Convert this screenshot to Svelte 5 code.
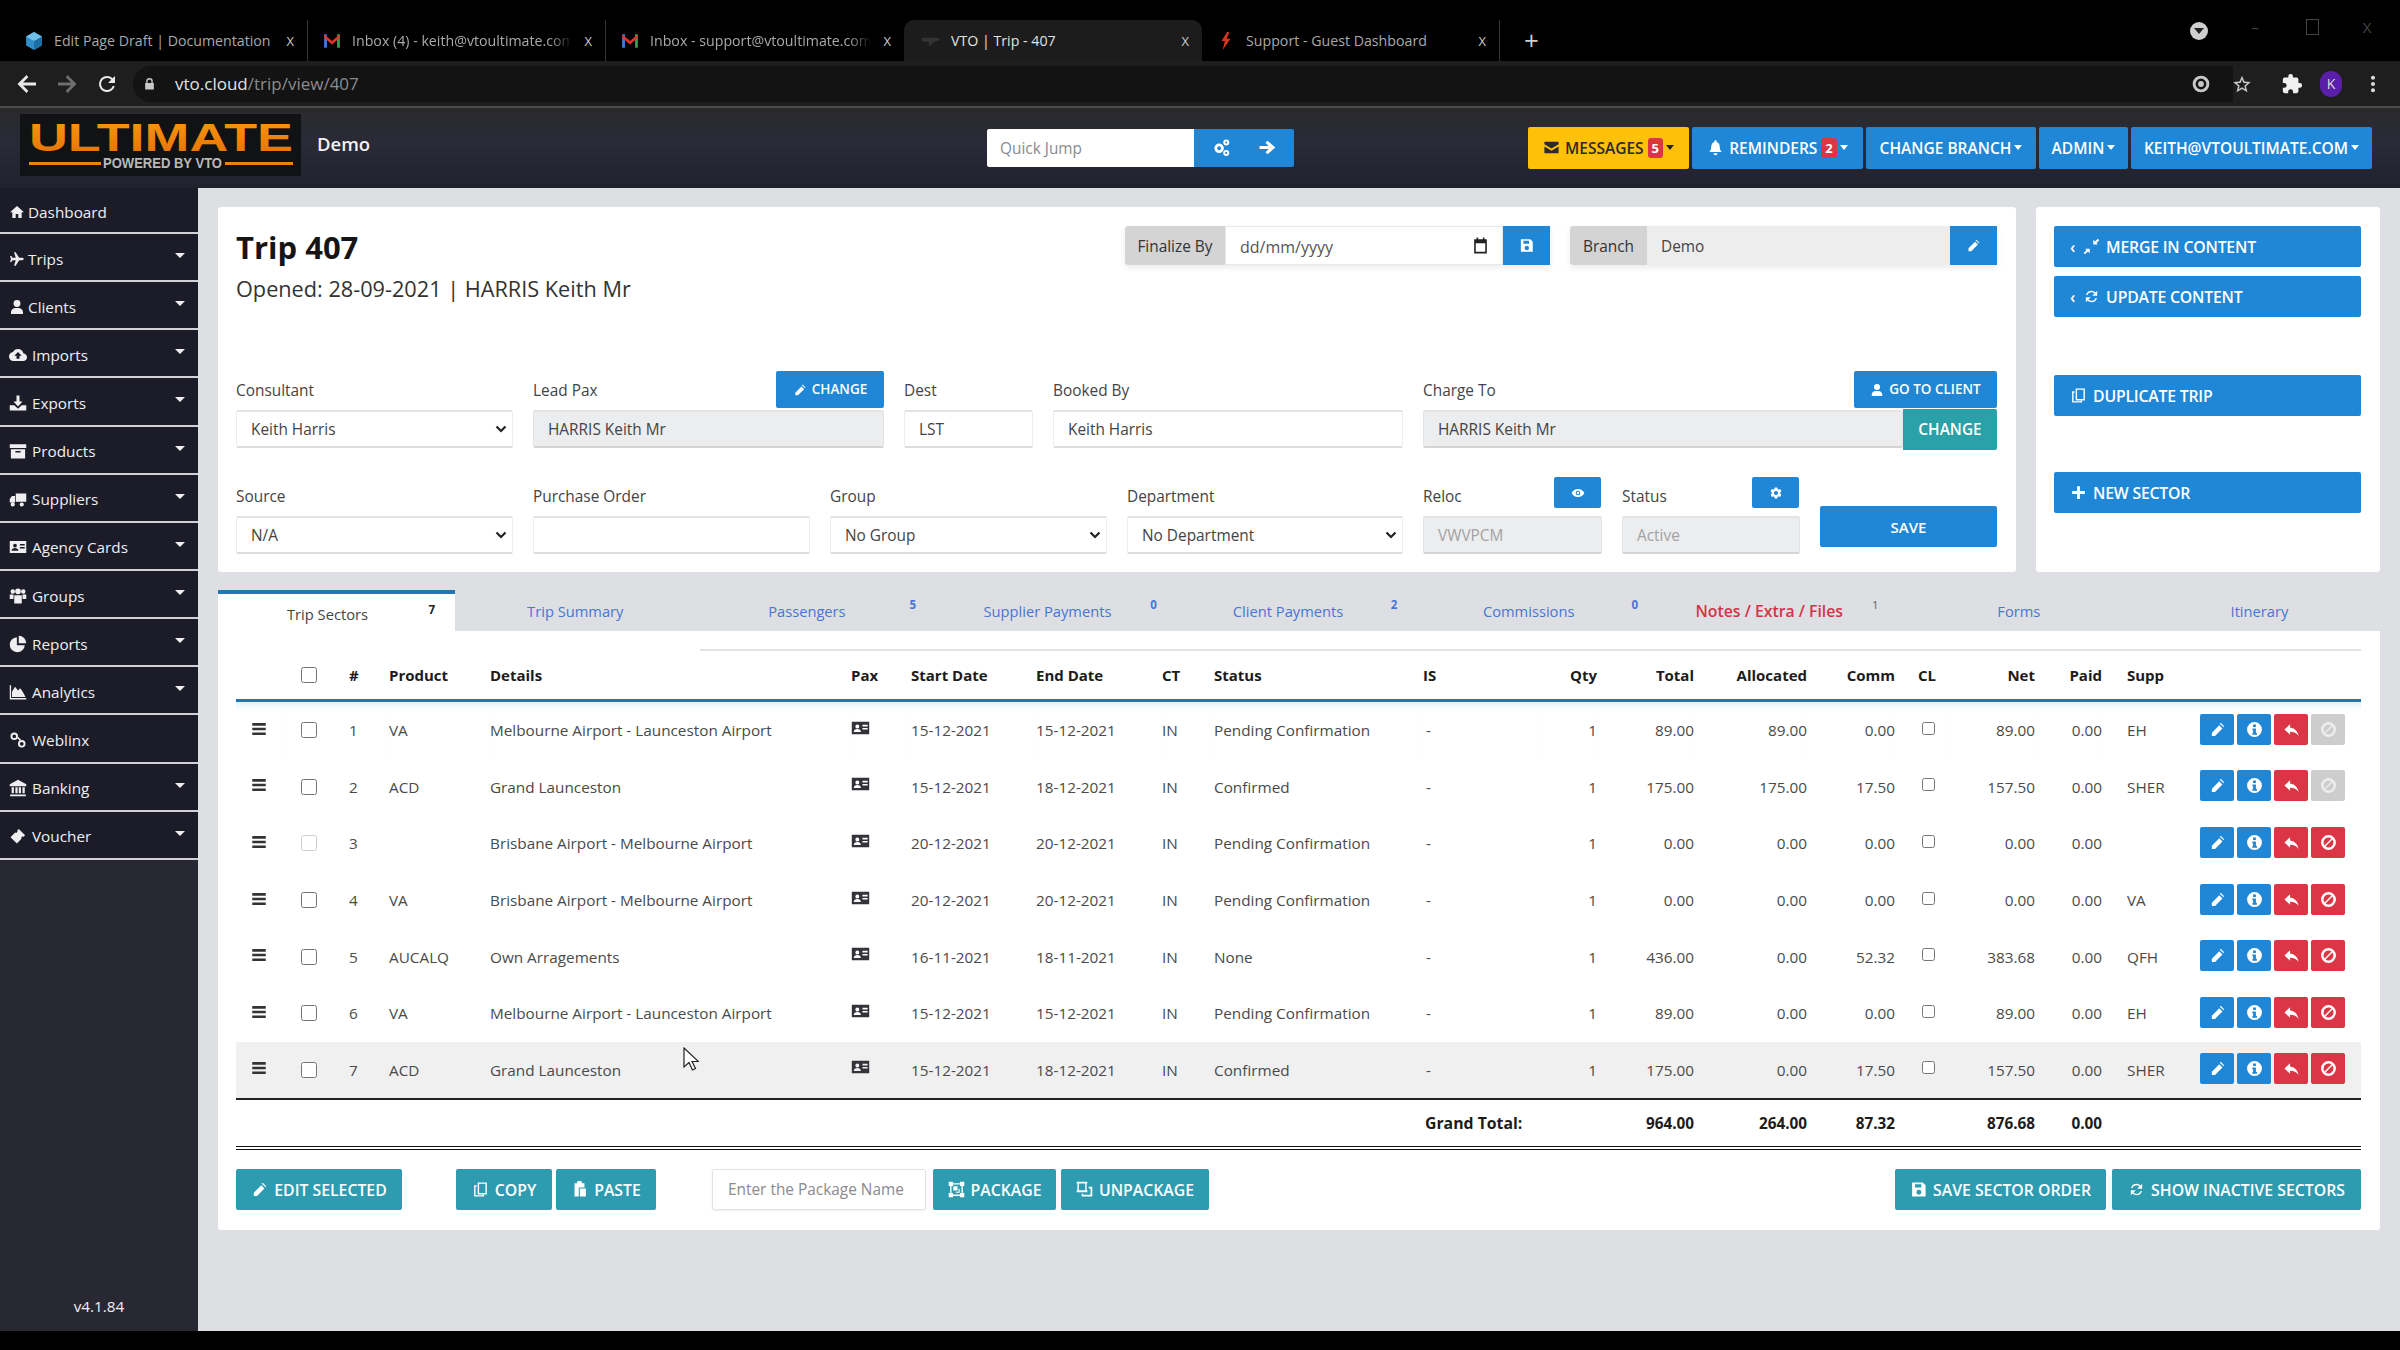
<script>
	const icons = {
		home: 'M12 3 1.5 12.5H5V21h5v-6h4v6h5v-8.5h3.5z',
		plane: 'M22 12c0-1-1-1.8-2.2-1.8h-4.6L10 2H7.6l2.5 8.2H5.4L3.4 7.6H1.5L3 12l-1.5 4.4h1.9l2-2.6h4.7L7.6 22H10l5.2-8.2h4.6C21 13.8 22 13 22 12z',
		user: 'M12 12a5.2 5.2 0 1 0 0-10.4A5.2 5.2 0 0 0 12 12zm-2 1.5c-4 0-7 2.6-7 6.5v2.4h18V20c0-3.9-3-6.5-7-6.5z',
		cloud: 'M19.35 10.04C18.67 6.59 15.64 4 12 4 9.11 4 6.6 5.64 5.35 8.04 2.34 8.36 0 10.91 0 14c0 3.31 2.69 6 6 6h13c2.76 0 5-2.24 5-5 0-2.64-2.05-4.78-4.65-4.96zM14 13v4h-4v-4H7l5-5 5 5h-3z',
		download: 'M10 2h4v8h4l-6 6.5L6 10h4zM1 15h6l5 4.5 5-4.5h6v7H1z',
		archive: 'M1 3h22v5H1zM2.5 9.5h19V22h-19zM8.5 12v2h7v-2z',
		truck: 'M23 4.500H9v11h14zM8 8H4L1 12v4.500h7zM5 16.500a2.800 2.800 0 1 0 0 5.600 2.800 2.800 0 0 0 0-5.600zM17 16.500a2.800 2.800 0 1 0 0 5.600 2.800 2.800 0 0 0 0-5.600z',
		card: 'M1 4h22v16H1zM8 7.500a2.500 2.500 0 1 0 0 5 2.500 2.500 0 0 0 0-5zM3.500 17c0-2.500 2-3.800 4.500-3.800s4.500 1.300 4.500 3.800zM14.500 8v2H21V8zM14.500 12v2H21v-2z',
		group: 'M5 3a3 3 0 1 0 0 6 3 3 0 0 0 0-6zM19 3a3 3 0 1 0 0 6 3 3 0 0 0 0-6zM12 2a3.800 3.800 0 1 0 0 7.600A3.800 3.800 0 0 0 12 2zM1 10h5v6H1zM18 10h5v6h-5zM7 11h10v11H7z',
		pie: 'M10.500 3A10 10 0 1 0 21 13.500H10.500zM13 1a10 10 0 0 1 10 10H13z',
		area: 'M1 3h1.800v17H23v2H1zM4 18.500v-7L8 5l4 5 3-3 3.500 5 3.500 6.500z',
		link: 'M7 2a5 5 0 1 0 0 10 5 5 0 0 0 0-10zm0 2.500a2.500 2.500 0 1 1 0 5 2.500 2.500 0 0 1 0-5zM17 12a5 5 0 1 0 0 10 5 5 0 0 0 0-10zm0 2.500a2.500 2.500 0 1 1 0 5 2.500 2.500 0 0 1 0-5zM11 9.500l1.500-1.500 3.500 3.500-1.500 1.500z',
		bank: 'M12 1 1 7v2.500h22V7zM3.500 11h3v8h-3zM8.500 11h3v8h-3zM13 11h3v8h-3zM18 11h3v8h-3zM1.500 20.500h21V23h-21z',
		ticket: 'M13 2.500 21.500 11l-2 2a2 2 0 0 0-2.800 2.800L10.500 22 2 13.500l6.200-6.200A2 2 0 0 0 11 4.500z',
		pencil: 'M4 16.500V21h4.500L19 10.500 14.500 6zM20.700 8.800a1.500 1.500 0 0 0 0-2.100l-3.400-3.400a1.500 1.500 0 0 0-2.100 0L16 4.500z',
		info: 'M12 1.500a10.500 10.500 0 1 0 0 21 10.500 10.500 0 0 0 0-21zM10 5h4v3.500h-4zM9 10.500h5v6.500h1.500v2.500h-6.500V17H10v-4H9z',
		reply: 'M10 9V4.500L2 12l8 7.500V15c5.500 0 9 1.600 12 6-1-6-4.500-11-12-12z',
		ban: 'M12 1.500a10.500 10.500 0 1 0 0 21 10.500 10.500 0 0 0 0-21zM5 12a7 7 0 0 1 11.200-5.600l-9.800 9.800A7 7 0 0 1 5 12zm7 7a7 7 0 0 1-4.200-1.400l9.800-9.800A7 7 0 0 1 12 19z',
		save: 'M3 2h15l4 4v16H3zM7 4.500V9h9V4.500zM12.500 12.500a3.500 3.500 0 1 0 0 7 3.500 3.500 0 0 0 0-7z',
		eye: 'M12 5C7 5 2.700 8.100 1 12c1.700 3.900 6 7 11 7s9.300-3.100 11-7c-1.700-3.900-6-7-11-7zm0 3a4 4 0 1 1 0 8 4 4 0 0 1 0-8zm0 1.800a2.200 2.200 0 1 0 0 4.400 2.200 2.200 0 0 0 0-4.400z',
		gear: 'M19.140 12.940c.04-.3.06-.61.06-.94 0-.32-.02-.64-.07-.94l2.030-1.580a.49.49 0 0 0 .12-.61l-1.920-3.320a.488.488 0 0 0-.59-.22l-2.390.96c-.5-.38-1.030-.7-1.620-.94l-.36-2.540a.484.484 0 0 0-.48-.41h-3.840c-.24 0-.43.17-.47.41l-.36 2.540c-.59.24-1.130.57-1.620.94l-2.390-.96c-.22-.08-.47 0-.59.22L2.740 8.870c-.12.21-.08.47.12.61l2.030 1.580c-.05.3-.09.63-.09.94s.02.64.07.94l-2.030 1.580a.49.49 0 0 0-.12.61l1.920 3.320c.12.22.37.29.59.22l2.390-.96c.5.38 1.030.7 1.620.94l.36 2.540c.05.24.24.41.48.41h3.840c.24 0 .44-.17.47-.41l.36-2.540c.59-.24 1.130-.56 1.620-.94l2.390.96c.22.08.47 0 .59-.22l1.920-3.320c.12-.22.07-.47-.12-.61l-2.010-1.580zM12 15.600A3.600 3.600 0 1 1 12 8.400a3.600 3.600 0 0 1 0 7.200z',
		envelope: 'M2 4h20v3.500l-10 6-10-6zM2 10.500l10 6 10-6V20H2z',
		bell: 'M12 23a2.800 2.800 0 0 0 2.800-2.800H9.200A2.800 2.800 0 0 0 12 23zM21 18.500c-1.500-1.500-3-3-3-8 0-3.200-2-5.600-4.500-6.300V3a1.500 1.500 0 0 0-3 0v1.200C8 4.900 6 7.300 6 10.500c0 5-1.500 6.500-3 8z',
		cogs: 'M9 7a6 6 0 1 0 0 12A6 6 0 0 0 9 7zm0 3.500a2.500 2.500 0 1 1 0 5 2.500 2.500 0 0 1 0-5zM18 2a3.800 3.800 0 1 0 0 7.600A3.800 3.800 0 0 0 18 2zm0 2.500a1.300 1.300 0 1 1 0 2.600 1.300 1.300 0 0 1 0-2.600zM18 15a3.800 3.800 0 1 0 0 7.600 3.800 3.800 0 0 0 0-7.600zm0 2.500a1.300 1.300 0 1 1 0 2.600 1.300 1.300 0 0 1 0-2.600z',
		arrow: 'M12 3.500 9.500 6l4 4H2v4h11.500l-4 4 2.500 2.500L22 12z',
		copy: 'M8 2h13v17H8zM10 4v13h9V4zM3 6h3.500v2H5v12h10v-.5h2V22H3z',
		paste: 'M5 3h3.500a3.500 3.500 0 0 1 7 0H19v6h-8v13H5zM12.500 10.500H21V22h-8.500z',
		pack: 'M1 1h6v2h10V1h6v6h-2v10h2v6h-6v-2H7v2H1v-6h2V7H1zM7 5v2H5v10h2v2h10v-2h2V7h-2V5zM7.500 7.500h6v6h-6zM15 11h1.500v5.500H11V15h4z',
		unpack: 'M1 1h15v2.500H15V13h1v3H1v-3h1V3.500H1zM4 3.500V13h9V3.500zM18 8h5v14H8v-4h2v1.500h10.500v-9H18z',
		refresh: 'M17.650 6.350A7.958 7.958 0 0 0 12 4a8 8 0 0 0-7.730 6h2.080A6 6 0 0 1 12 6c1.660 0 3.140.69 4.220 1.780L13 11h7V4zM6.350 17.650A7.958 7.958 0 0 0 12 20a8 8 0 0 0 7.730-6h-2.080A6 6 0 0 1 12 18c-1.660 0-3.140-.69-4.220-1.780L11 13H4v7z',
		merge: 'M3 15h6.500v6.500L7 19l-4 4-2-2 4-4zM21 9h-6.500V2.500L17 5l4-4 2 2-4 4z',
		plus: 'M10 3h4v7h7v4h-7v7h-4v-7H3v-4h7z',
		calendar: 'M4 4h3V2h2v2h6V2h2v2h3v18H4zM6 9v11h12V9z',
		bars: 'M3 4h18v3.500H3zM3 10.250h18v3.500H3zM3 16.500h18V20H3z',
		back: 'M21 10.500H8l5.300-5.300L11.500 3 2.500 12l9 9 1.800-2.200L8 13.500h13z',
		forward: 'M3 10.500h13l-5.300-5.300L12.500 3l9 9-9 9-1.800-2.200 5.300-5.300H3z',
		reload: 'M17.650 6.350A7.958 7.958 0 0 0 12 4a8 8 0 1 0 7.730 10h-2.080A6 6 0 1 1 12 6c1.660 0 3.140.69 4.220 1.780L13 11h7V4z',
		lock: 'M6 10V7a6 6 0 0 1 12 0v3h2v12H4V10zM8.500 10h7V7a3.500 3.500 0 0 0-7 0z',
		star: 'M12 2l3 7 7.500.6-5.700 5 1.800 7.400L12 18l-6.600 4 1.800-7.400-5.700-5L9 9zM12 6.500l-1.700 4.200-4.500.3 3.400 3-1.100 4.400 3.900-2.400 3.900 2.400-1.100-4.400 3.400-3-4.500-.3z',
		puzzle: 'M20.500 11H19V7a2 2 0 0 0-2-2h-4V3.500a2.500 2.500 0 0 0-5 0V5H4a2 2 0 0 0-2 2v3.800h1.500a2.700 2.700 0 0 1 0 5.400H2V20a2 2 0 0 0 2 2h3.800v-1.500a2.700 2.700 0 0 1 5.400 0V22H17a2 2 0 0 0 2-2v-4h1.500a2.500 2.500 0 0 0 0-5z',
		ring: 'M12 2a10 10 0 1 0 0 20 10 10 0 0 0 0-20zm0 3.500a6.500 6.500 0 1 1 0 13 6.500 6.500 0 0 1 0-13zm0 3a3.500 3.500 0 1 0 0 7 3.500 3.500 0 0 0 0-7z',
		dots: 'M12 3a2.200 2.200 0 1 0 0 4.400A2.200 2.200 0 0 0 12 3zM12 9.800a2.200 2.200 0 1 0 0 4.400 2.200 2.200 0 0 0 0-4.400zM12 16.600a2.200 2.200 0 1 0 0 4.400 2.200 2.200 0 0 0 0-4.400z'
	};

	const tabs = [
		{ title: 'Edit Page Draft | Documentation', fav: 'hex' },
		{ title: 'Inbox (4) - keith@vtoultimate.com', fav: 'gmail', fade: true },
		{ title: 'Inbox - support@vtoultimate.com', fav: 'gmail', fade: true },
		{ title: 'VTO | Trip - 407', fav: 'plane', active: true },
		{ title: 'Support - Guest Dashboard', fav: 'bolt' }
	];

	const menu = [
		{ label: 'Dashboard', icon: 'home' },
		{ label: 'Trips', icon: 'plane', caret: true },
		{ label: 'Clients', icon: 'user', caret: true },
		{ label: 'Imports', icon: 'cloud', caret: true, wide: true },
		{ label: 'Exports', icon: 'download', caret: true, wide: true },
		{ label: 'Products', icon: 'archive', caret: true, wide: true },
		{ label: 'Suppliers', icon: 'truck', caret: true, wide: true },
		{ label: 'Agency Cards', icon: 'card', caret: true, wide: true },
		{ label: 'Groups', icon: 'group', caret: true, wide: true },
		{ label: 'Reports', icon: 'pie', caret: true, wide: true },
		{ label: 'Analytics', icon: 'area', caret: true, wide: true },
		{ label: 'Weblinx', icon: 'link', wide: true },
		{ label: 'Banking', icon: 'bank', caret: true, wide: true },
		{ label: 'Voucher', icon: 'ticket', caret: true, wide: true }
	];

	const tripTabs = [
		{ label: 'Trip Sectors', badge: '7', active: true },
		{ label: 'Trip Summary' },
		{ label: 'Passengers', badge: '5' },
		{ label: 'Supplier Payments', badge: '0' },
		{ label: 'Client Payments', badge: '2' },
		{ label: 'Commissions', badge: '0' },
		{ label: 'Notes / Extra / Files', badge: '1', red: true },
		{ label: 'Forms' },
		{ label: 'Itinerary' }
	];

	const rows = [
		{ n: 1, product: 'VA', details: 'Melbourne Airport - Launceston Airport', start: '15-12-2021', end: '15-12-2021', status: 'Pending Confirmation', total: '89.00', alloc: '89.00', comm: '0.00', net: '89.00', supp: 'EH', off: true },
		{ n: 2, product: 'ACD', details: 'Grand Launceston', start: '15-12-2021', end: '18-12-2021', status: 'Confirmed', total: '175.00', alloc: '175.00', comm: '17.50', net: '157.50', supp: 'SHER', off: true },
		{ n: 3, product: '', details: 'Brisbane Airport - Melbourne Airport', start: '20-12-2021', end: '20-12-2021', status: 'Pending Confirmation', total: '0.00', alloc: '0.00', comm: '0.00', net: '0.00', supp: '', dim: true },
		{ n: 4, product: 'VA', details: 'Brisbane Airport - Melbourne Airport', start: '20-12-2021', end: '20-12-2021', status: 'Pending Confirmation', total: '0.00', alloc: '0.00', comm: '0.00', net: '0.00', supp: 'VA' },
		{ n: 5, product: 'AUCALQ', details: 'Own Arragements', start: '16-11-2021', end: '18-11-2021', status: 'None', total: '436.00', alloc: '0.00', comm: '52.32', net: '383.68', supp: 'QFH' },
		{ n: 6, product: 'VA', details: 'Melbourne Airport - Launceston Airport', start: '15-12-2021', end: '15-12-2021', status: 'Pending Confirmation', total: '89.00', alloc: '0.00', comm: '0.00', net: '89.00', supp: 'EH' },
		{ n: 7, product: 'ACD', details: 'Grand Launceston', start: '15-12-2021', end: '18-12-2021', status: 'Confirmed', total: '175.00', alloc: '0.00', comm: '17.50', net: '157.50', supp: 'SHER', hover: true }
	];

	const widths = [46, 54, 53, 101, 361, 60, 125, 126, 52, 209, 117, 57, 97, 113, 88, 55, 85, 67, 98, 161];
</script>

{#snippet ic(name, cls = '')}
	<svg class="ic {cls}" viewBox="0 0 24 24"><path d={icons[name]} fill-rule="evenodd" /></svg>
{/snippet}

{#snippet favicon(kind)}
	{#if kind === 'hex'}
		<svg class="fav" viewBox="0 0 16 16"><path d="M8 0l7 4v8l-7 4-7-4V4z" fill="#2f8fc9" /><path d="M8 8l7-4v8l-7 4z" fill="#1e6ea3" /><path d="M8 0l7 4-7 4-7-4z" fill="#6fc0e8" /></svg>
	{:else if kind === 'gmail'}
		<svg class="fav" viewBox="0 0 16 16"><path d="M1 2h2.500v12H1z" fill="#3b7ddd" /><path d="M12.500 2H15v12h-2.500z" fill="#2ea44f" /><path d="M1 2l7 6 7-6v3L8 11 1 5z" fill="#e0342b" /></svg>
	{:else if kind === 'plane'}
		<svg class="fav" viewBox="0 0 16 16"><path d="M0 5h14l2 2-6 2-3 4-1-4-6-1z" fill="#333" /></svg>
	{:else}
		<svg class="fav" viewBox="0 0 16 16"><path d="M9 0 4 8h3l-2 8 7-10H8.500L11 0z" fill="#d6371f" /></svg>
	{/if}
{/snippet}

<div class="screen">
	<div class="tabstrip">
		{#each tabs as tab}
			<div class="tab" class:active={tab.active}>
				{@render favicon(tab.fav)}
				<span class="tab-title" class:fade={tab.fade}>{tab.title}</span>
				<span class="tab-x">X</span>
			</div>
		{/each}
		<span class="newtab">+</span>
		<div class="winctl">
			<span class="prof"><i></i></span>
			<span class="win">–</span>
			<span class="win restore"></span>
			<span class="win">X</span>
		</div>
	</div>

	<div class="toolbar">
		<span class="nav">{@render ic('back')}</span>
		<span class="nav dim">{@render ic('forward')}</span>
		<span class="nav">{@render ic('reload')}</span>
		<div class="omni">
			{@render ic('lock', 'lock')}
			<span class="url">vto.cloud<span>/trip/view/407</span></span>
		</div>
		<div class="tools">
			{@render ic('ring', 'tool ring')}
			{@render ic('star', 'tool star')}
			{@render ic('puzzle', 'tool puzzle')}
			<span class="avatar">K</span>
			{@render ic('dots', 'tool dots')}
		</div>
	</div>

	<header class="topbar">
		<div class="logo">
			<svg viewBox="0 0 281 62" width="281" height="62">
				<defs>
					<linearGradient id="orange" x1="0" y1="0" x2="0" y2="1">
						<stop offset="0" stop-color="#f79a12" />
						<stop offset="1" stop-color="#e46f02" />
					</linearGradient>
				</defs>
				<text x="9" y="37" textLength="264" lengthAdjust="spacingAndGlyphs" class="logo-main" fill="url(#orange)">ULTIMATE</text>
				<rect x="9" y="48" width="72" height="3" fill="#e8860c" />
				<rect x="205" y="48" width="68" height="3" fill="#e8860c" />
				<text x="83" y="54" textLength="119" lengthAdjust="spacingAndGlyphs" class="logo-sub">POWERED BY VTO</text>
			</svg>
		</div>
		<span class="brand">Demo</span>
		<div class="jump">
			<input placeholder="Quick Jump" />
			<div class="jump-btns">
				{@render ic('cogs')}
				{@render ic('arrow')}
			</div>
		</div>
		<nav class="topnav">
			<span class="tbtn yellow msg">{@render ic('envelope')}MESSAGES<b class="pill">5</b><i class="car dark"></i></span>
			<span class="tbtn rem">{@render ic('bell')}REMINDERS<b class="pill">2</b><i class="car"></i></span>
			<span class="tbtn branch">CHANGE BRANCH<i class="car"></i></span>
			<span class="tbtn admin">ADMIN<i class="car"></i></span>
			<span class="tbtn mail">KEITH@VTOULTIMATE.COM<i class="car"></i></span>
		</nav>
	</header>

	<div class="body">
		<aside class="side">
			{#each menu as item, i}
				<div class="side-item" class:first={i === 0}>
					<span class="side-ic" class:wide={item.wide}>{@render ic(item.icon)}</span>
					<span>{item.label}</span>
					{#if item.caret}<i class="side-car"></i>{/if}
				</div>
			{/each}
			<div class="version">v4.1.84</div>
		</aside>

		<main class="main">
			<div class="cards">
				<section class="card trip">
					<div class="trip-head">
						<div>
							<h1>Trip 407</h1>
							<p class="opened">Opened: 28-09-2021 | HARRIS Keith Mr</p>
						</div>
						<div class="head-groups">
							<div class="group finalize">
								<span class="addon">Finalize By</span>
								<div class="fake date">dd/mm/yyyy{@render ic('calendar')}</div>
								<span class="sq">{@render ic('save')}</span>
							</div>
							<div class="group branch-group">
								<span class="addon">Branch</span>
								<div class="fake grey">Demo</div>
								<span class="sq">{@render ic('pencil')}</span>
							</div>
						</div>
					</div>

					<div class="form row1">
						<div>
							<div class="lab"><label for="cons">Consultant</label></div>
							<select id="cons" class="ctl"><option>Keith Harris</option></select>
						</div>
						<div>
							<div class="lab"><span>Lead Pax</span><span class="mini">{@render ic('pencil')}CHANGE</span></div>
							<div class="ctl ro">HARRIS Keith Mr</div>
						</div>
						<div>
							<div class="lab"><span>Dest</span></div>
							<div class="ctl">LST</div>
						</div>
						<div>
							<div class="lab"><span>Booked By</span></div>
							<div class="ctl">Keith Harris</div>
						</div>
						<div>
							<div class="lab"><span>Charge To</span><span class="mini goto">{@render ic('user')}GO TO CLIENT</span></div>
							<div class="charge">
								<div class="ctl ro">HARRIS Keith Mr</div>
								<span class="charge-btn">CHANGE</span>
							</div>
						</div>
					</div>

					<div class="form row2">
						<div>
							<div class="lab"><label for="src">Source</label></div>
							<select id="src" class="ctl"><option>N/A</option></select>
						</div>
						<div>
							<div class="lab"><span>Purchase Order</span></div>
							<div class="ctl"></div>
						</div>
						<div>
							<div class="lab"><label for="grp">Group</label></div>
							<select id="grp" class="ctl"><option>No Group</option></select>
						</div>
						<div>
							<div class="lab"><label for="dep">Department</label></div>
							<select id="dep" class="ctl"><option>No Department</option></select>
						</div>
						<div>
							<div class="lab"><span>Reloc</span><span class="tiny">{@render ic('eye')}</span></div>
							<div class="ctl ro faint">VWVPCM</div>
						</div>
						<div>
							<div class="lab"><span>Status</span><span class="tiny">{@render ic('gear')}</span></div>
							<div class="ctl ro faint">Active</div>
						</div>
						<div class="save-wrap"><span class="save">SAVE</span></div>
					</div>
				</section>

				<section class="card actions">
					<span class="abtn"><em>‹</em>{@render ic('merge')}MERGE IN CONTENT</span>
					<span class="abtn update"><em>‹</em>{@render ic('refresh')}UPDATE CONTENT</span>
					<span class="abtn dup">{@render ic('copy')}DUPLICATE TRIP</span>
					<span class="abtn sector">{@render ic('plus')}NEW SECTOR</span>
				</section>
			</div>

			<div class="trip-tabs">
				{#each tripTabs as t}
					<div class="ttab" class:on={t.active} class:has={t.badge} class:red={t.red}>
						{t.label}
						{#if t.badge}<sup>{t.badge}</sup>{/if}
					</div>
				{/each}
			</div>

			<section class="sectors">
				<table>
					<colgroup>
						{#each widths as w}<col style="width:{w}px" />{/each}
					</colgroup>
					<thead>
						<tr>
							<th></th>
							<th class="c"><input type="checkbox" class="chk" /></th>
							<th class="num">#</th>
							<th>Product</th>
							<th>Details</th>
							<th>Pax</th>
							<th>Start Date</th>
							<th>End Date</th>
							<th>CT</th>
							<th>Status</th>
							<th>IS</th>
							<th class="r">Qty</th>
							<th class="r">Total</th>
							<th class="r">Allocated</th>
							<th class="r">Comm</th>
							<th class="cl">CL</th>
							<th class="r">Net</th>
							<th class="r">Paid</th>
							<th class="supp">Supp</th>
							<th></th>
						</tr>
					</thead>
					<tbody>
						{#each rows as row}
							<tr class:hover={row.hover}>
								<td class="c">{@render ic('bars', 'drag')}</td>
								<td class="c"><input type="checkbox" class="chk" class:dimchk={row.dim} /></td>
								<td class="num">{row.n}</td>
								<td>{row.product}</td>
								<td>{row.details}</td>
								<td>{@render ic('card', 'pax')}</td>
								<td>{row.start}</td>
								<td>{row.end}</td>
								<td>IN</td>
								<td>{row.status}</td>
								<td class="dash">-</td>
								<td class="r">1</td>
								<td class="r">{row.total}</td>
								<td class="r">{row.alloc}</td>
								<td class="r">{row.comm}</td>
								<td class="cl"><input type="checkbox" class="chk small" /></td>
								<td class="r">{row.net}</td>
								<td class="r">0.00</td>
								<td class="supp">{row.supp}</td>
								<td>
									<div class="acts">
										<span class="act blue">{@render ic('pencil')}</span>
										<span class="act blue">{@render ic('info')}</span>
										<span class="act red">{@render ic('reply')}</span>
										<span class="act" class:red={!row.off} class:off={row.off}>{@render ic('ban')}</span>
									</div>
								</td>
							</tr>
						{/each}
					</tbody>
					<tfoot>
						<tr>
							<td colspan="10"></td>
							<td colspan="2" class="gt">Grand Total:</td>
							<td class="r">964.00</td>
							<td class="r">264.00</td>
							<td class="r">87.32</td>
							<td></td>
							<td class="r">876.68</td>
							<td class="r">0.00</td>
							<td colspan="2"></td>
						</tr>
					</tfoot>
				</table>

				<div class="bottom">
					<span class="tb edit">{@render ic('pencil')}EDIT SELECTED</span>
					<span class="tb copy">{@render ic('copy')}COPY</span>
					<span class="tb paste">{@render ic('paste')}PASTE</span>
					<input class="pkg" placeholder="Enter the Package Name" />
					<span class="tb package">{@render ic('pack')}PACKAGE</span>
					<span class="tb unpackage">{@render ic('unpack')}UNPACKAGE</span>
					<span class="tb order">{@render ic('save')}SAVE SECTOR ORDER</span>
					<span class="tb inactive">{@render ic('refresh')}SHOW INACTIVE SECTORS</span>
				</div>
			</section>
		</main>
	</div>

	<div class="foot"></div>

	<svg class="cursor" viewBox="0 0 16 24" width="16" height="24"><path d="M1 1v19l5-4.500 3.500 7.500 3-1.500L9 14.500h6.500z" fill="#fff" stroke="#222" stroke-width="1.200" /></svg>
</div>

<style>
	:global(body) {
		margin: 0;
		background: #000;
	}

	.screen {
		position: relative;
		width: 2400px;
		height: 1350px;
		overflow: hidden;
		display: flex;
		flex-direction: column;
		font-family: 'Open Sans', 'Liberation Sans', sans-serif;
		font-size: 15.4px;
		color: #444;
	}

	.ic {
		width: 15px;
		height: 15px;
		fill: currentColor;
		flex: none;
	}

	/* browser chrome */
	.tabstrip {
		height: 61px;
		background: #000;
		display: flex;
		align-items: flex-end;
		padding-left: 10px;
		box-sizing: border-box;
	}

	.tab {
		width: 298px;
		height: 41px;
		box-sizing: border-box;
		display: flex;
		align-items: center;
		padding: 0 13px 0 15px;
		color: #a9a9a9;
		font-size: 14.2px;
		position: relative;
		border-right: 1px solid #333;
	}

	.tab.active {
		background: #1c1c1c;
		border-radius: 10px 10px 0 0;
		color: #e2e2e2;
		border-right: none;
		padding-left: 18px;
	}

	.tab:nth-child(3) {
		border-right: none;
	}

	.fav {
		width: 18px;
		height: 18px;
		flex: none;
		margin-right: 11px;
	}

	.tab-title {
		flex: 1;
		white-space: nowrap;
		overflow: hidden;
	}

	.tab-title.fade {
		-webkit-mask-image: linear-gradient(90deg, #000 90%, transparent);
		mask-image: linear-gradient(90deg, #000 90%, transparent);
	}

	.tab-x {
		margin-left: 12px;
		font-size: 13px;
		color: #ccc;
	}

	.newtab {
		color: #ccc;
		font-size: 26px;
		line-height: 41px;
		margin-left: 24px;
	}

	.winctl {
		margin-left: auto;
		display: flex;
		align-items: center;
		height: 61px;
		padding: 0 24px 8px 0;
		box-sizing: border-box;
		color: #444;
	}

	.prof {
		width: 18px;
		height: 18px;
		border-radius: 50%;
		background: #cfcfcf;
		display: flex;
		align-items: center;
		justify-content: center;
		margin: 8px 38px 0 0;
	}

	.prof i {
		border: 5px solid transparent;
		border-top: 6px solid #222;
		border-bottom: 0;
	}

	.win {
		width: 18px;
		text-align: center;
		font-size: 15px;
		margin-left: 39px;
	}

	.win:nth-child(2) {
		margin-left: 0;
	}

	.restore {
		width: 11px;
		height: 14px;
		border: 1px solid #444;
		margin-left: 42px;
	}

	.toolbar {
		height: 47px;
		background: #1e1e1e;
		border-bottom: 2px solid #4c4c4c;
		box-sizing: border-box;
		display: flex;
		align-items: center;
		padding-left: 15px;
	}

	.nav {
		width: 24px;
		height: 24px;
		color: #e8e8e8;
		margin-right: 16px;
	}

	.nav .ic {
		width: 24px;
		height: 24px;
	}

	.nav.dim {
		color: #6e6e6e;
	}

	.omni {
		width: 2100px;
		height: 36px;
		margin-left: -2px;
		background: #131313;
		border-radius: 18px 0 0 18px;
		display: flex;
		align-items: center;
		padding-left: 10px;
		box-sizing: border-box;
	}

	.omni .lock {
		width: 13px;
		height: 14px;
		color: #c8c8c8;
		margin-right: 19px;
	}

	.url {
		color: #e2e2e2;
		font-size: 17px;
	}

	.url span {
		color: #8c8c8c;
	}

	.tools {
		margin-left: -42px;
		display: flex;
		align-items: center;
		color: #c8c8c8;
	}

	.tools .ring {
		width: 20px;
		height: 20px;
	}

	.tools .star {
		width: 20px;
		height: 20px;
		margin-left: 21px;
	}

	.tools .puzzle {
		width: 22px;
		height: 22px;
		margin-left: 29px;
		color: #f0f0f0;
	}

	.avatar {
		width: 22px;
		height: 26px;
		border-radius: 12px;
		background: #5b1ea8;
		color: #ddd;
		font-size: 14px;
		text-align: center;
		line-height: 26px;
		margin-left: 17px;
	}

	.tools .dots {
		width: 22px;
		height: 22px;
		margin-left: 20px;
		color: #ddd;
	}

	/* app header */
	.topbar {
		height: 80px;
		flex: none;
		background: linear-gradient(#2a2a2d, #2a2a38 45%, #20212d);
		display: flex;
		align-items: center;
		padding-left: 20px;
		box-sizing: border-box;
	}

	.logo {
		width: 281px;
		height: 62px;
		background: #111214;
		margin-top: -6px;
	}

	.logo svg {
		display: block;
	}

	.logo-main {
		font: 700 38px 'Liberation Sans', sans-serif;
	}

	.logo-sub {
		font: 700 14px 'Liberation Sans', sans-serif;
		fill: #b9b9b9;
	}

	.brand {
		color: #f2f2f2;
		font-weight: 600;
		font-size: 18.5px;
		margin: -10px 0 0 16px;
		width: 670px;
		flex: none;
	}

	.jump {
		display: flex;
		height: 38px;
		margin-top: -1px;
	}

	.jump input {
		width: 207px;
		height: 38px;
		border: none;
		box-sizing: border-box;
		padding: 2px 13px 0;
		font: inherit;
		border-radius: 2px 0 0 2px;
	}

	.jump input::placeholder,
	.pkg::placeholder {
		color: #8a8a8f;
	}

	.jump-btns {
		width: 100px;
		background: #1f87d6;
		color: #fff;
		display: flex;
		align-items: center;
		justify-content: space-around;
		padding: 0 4px;
		box-sizing: border-box;
		border-radius: 0 2px 2px 0;
	}

	.jump-btns .ic {
		width: 19px;
		height: 19px;
	}

	.topnav {
		margin-left: 234px;
		display: flex;
		gap: 3px;
		height: 42px;
		margin-top: -1px;
	}

	.tbtn {
		background: #1f87d6;
		color: #fff;
		font-size: 15.5px;
		font-weight: 600;
		display: flex;
		align-items: center;
		justify-content: center;
		gap: 5px;
		border-radius: 2px;
		box-sizing: border-box;
	}

	.tbtn .ic {
		width: 17px;
		height: 17px;
	}

	.tbtn.yellow {
		background: #ffc107;
		color: #2b2b2b;
	}

	.msg { width: 161px; }
	.rem { width: 171px; }
	.branch { width: 170px; }
	.admin { width: 89px; }
	.mail { width: 241px; }

	.pill {
		background: #dc3545;
		color: #fff;
		font-size: 13px;
		padding: 1px 4px;
		border-radius: 3px;
		margin-left: -1px;
		font-weight: 700;
	}

	.car {
		border: 4.5px solid transparent;
		border-top: 5px solid #fff;
		border-bottom: 0;
		margin-left: -2px;
	}

	.car.dark {
		border-top-color: #222;
	}

	/* page body */
	.body {
		flex: 1;
		display: flex;
		min-height: 0;
	}

	.side {
		width: 198px;
		flex: none;
		background: #282833;
		display: flex;
		flex-direction: column;
		color: #efeff2;
		font-size: 15.3px;
	}

	.side-item {
		height: 48.15px;
		flex: none;
		box-sizing: border-box;
		display: flex;
		align-items: center;
		padding: 3px 0 0 9px;
		background: #1c1c28;
		border-bottom: 2px solid #d2d2d6;
		position: relative;
	}

	.side-item.first {
		height: 46px;
	}

	.side-ic {
		width: 19px;
		display: flex;
	}

	.side-ic.wide {
		width: 23px;
	}

	.side-ic .ic {
		width: 16px;
		height: 16px;
	}

	.side-ic.wide .ic {
		width: 18px;
		height: 18px;
	}

	.side-car {
		position: absolute;
		right: 13px;
		top: 19px;
		border: 5px solid transparent;
		border-top: 5px solid #eee;
		border-bottom: 0;
	}

	.version {
		margin-top: auto;
		text-align: center;
		padding-bottom: 15px;
		line-height: 20px;
	}

	.main {
		flex: 1;
		min-width: 0;
		background: #dedfe3;
		padding: 19px 20px 0;
		box-sizing: border-box;
		display: flex;
		flex-direction: column;
	}

	.cards {
		display: flex;
		gap: 20px;
		height: 365px;
		flex: none;
	}

	.card {
		background: #fff;
		box-sizing: border-box;
		border-radius: 3px;
	}

	.trip {
		width: 1798px;
		padding: 19px 19px 0 18px;
	}

	.trip-head {
		height: 144px;
		display: flex;
		justify-content: space-between;
	}

	h1 {
		margin: 0;
		font-size: 31px;
		font-weight: 700;
		line-height: 42px;
		color: #151515;
	}

	.opened {
		margin: 6px 0 0;
		font-size: 21.7px;
		line-height: 30px;
		color: #333;
	}

	.head-groups {
		display: flex;
		gap: 20px;
	}

	.group {
		display: flex;
		height: 39px;
		box-shadow: 0 3px 6px rgba(0, 0, 0, 0.08);
	}

	.addon {
		background: #d4d4d4;
		color: #333;
		padding: 1px 13px 0;
		display: flex;
		align-items: center;
		border-radius: 3px 0 0 3px;
	}

	.finalize .addon {
		width: 100px;
		box-sizing: border-box;
		justify-content: center;
		padding: 1px 0 0;
	}

	.fake {
		display: flex;
		align-items: center;
		justify-content: space-between;
		padding: 2px 12px 0 14px;
		box-sizing: border-box;
		background: #fff;
		border: 1px solid #e8e8e8;
		color: #555;
	}

	.fake.date {
		width: 278px;
		font-size: 16px;
	}

	.fake.date .ic {
		width: 19px;
		height: 19px;
		color: #222;
		margin-top: -2px;
	}

	.fake.grey {
		width: 303px;
		background: #ededee;
		border: none;
		color: #444;
	}

	.sq {
		width: 47px;
		background: #1f87d6;
		color: #fff;
		display: flex;
		align-items: center;
		justify-content: center;
	}

	.form {
		display: grid;
		gap: 20px;
	}

	.row1 {
		grid-template-columns: 277px 351px 129px 350px 1fr;
		margin-bottom: 27px;
	}

	.row2 {
		grid-template-columns: 277px 277px 277px 276px 179px 178px 1fr;
	}

	.lab {
		height: 40px;
		display: flex;
		justify-content: space-between;
		align-items: flex-start;
		line-height: 41px;
		color: #444;
	}

	.row2 .lab {
		height: 39px;
		line-height: 39px;
	}

	.mini {
		width: 108px;
		height: 37px;
		box-sizing: border-box;
		background: #1f87d6;
		color: #fff;
		font-size: 13.5px;
		font-weight: 600;
		display: flex;
		align-items: center;
		justify-content: center;
		gap: 5px;
		border-radius: 2px;
		line-height: 1;
		margin-top: 1px;
	}

	.mini.goto {
		width: 143px;
	}

	.mini .ic {
		width: 14px;
		height: 14px;
	}

	.tiny {
		width: 47px;
		height: 31px;
		background: #1f87d6;
		color: #fff;
		display: flex;
		align-items: center;
		justify-content: center;
		border-radius: 2px;
		margin-right: 1px;
	}

	.tiny .ic {
		width: 14px;
		height: 14px;
	}

	.ctl {
		display: flex;
		align-items: center;
		width: 100%;
		height: 38px;
		box-sizing: border-box;
		background: #fff;
		border: 1px solid #ededed;
		border-top: 2px solid #e2e2e2;
		border-bottom: 2px solid #dcdcdc;
		padding: 1px 14px 0;
		font: inherit;
		color: #444;
		border-radius: 2px;
	}

	.ctl.ro {
		background: #ecedef;
		border-color: #e4e4e4;
		border-bottom-color: #d4d4d4;
	}

	.ctl.faint {
		color: #a2a2a2;
	}

	select.ctl {
		padding: 1px 14px 0;
		appearance: none;
		background: #fff url("data:image/svg+xml,%3Csvg xmlns='http://www.w3.org/2000/svg' viewBox='0 0 12 8'%3E%3Cpath d='M1.5 1.500 6 6l4.500-4.500' fill='none' stroke='%23222' stroke-width='2.200'/%3E%3C/svg%3E") no-repeat right 5px center / 12px 8px;
	}

	.charge {
		display: flex;
	}

	.charge .ctl {
		flex: 1;
	}

	.charge-btn {
		width: 94px;
		height: 41px;
		flex: none;
		margin-top: -1px;
		background: #2aa0a8;
		color: #fff;
		font-weight: 600;
		display: flex;
		align-items: center;
		justify-content: center;
		border-radius: 0 2px 2px 0;
	}

	.save-wrap {
		padding-top: 29px;
	}

	.save {
		height: 41px;
		background: #1f87d6;
		color: #fff;
		font-weight: 600;
		font-size: 15px;
		display: flex;
		align-items: center;
		justify-content: center;
		border-radius: 2px;
	}

	.actions {
		flex: 1;
		padding: 19px 19px 0 18px;
		display: flex;
		flex-direction: column;
	}

	.abtn {
		height: 41px;
		background: #1f87d6;
		color: #fff;
		font-weight: 600;
		font-size: 15.8px;
		display: flex;
		align-items: center;
		padding-left: 16px;
		gap: 6px;
		border-radius: 2px;
		letter-spacing: -0.2px;
	}

	.abtn em {
		font-style: normal;
		margin-right: 2px;
	}

	.abtn .ic {
		width: 17px;
		height: 17px;
	}

	.abtn.update {
		margin-top: 9px;
	}

	.abtn.dup {
		margin-top: 58px;
	}

	.abtn.sector {
		margin-top: 56px;
	}

	/* tabs */
	.trip-tabs {
		margin-top: 18px;
		height: 41px;
		flex: none;
		display: flex;
	}

	.ttab {
		width: 240.6px;
		flex: none;
		box-sizing: border-box;
		height: 41px;
		display: flex;
		align-items: center;
		justify-content: center;
		color: #4876d4;
		font-size: 14.7px;
		position: relative;
		padding-top: 1px;
	}

	.ttab:first-child {
		width: 237px;
	}

	.ttab.has {
		padding-right: 18px;
	}

	.ttab.on {
		background: #fff;
		border-top: 4px solid #1f77b4;
		color: #444;
		padding-top: 2px;
	}

	.ttab.red {
		color: #d5324a;
		font-weight: 600;
		font-size: 15.8px;
	}

	sup {
		position: absolute;
		right: 20px;
		top: 8px;
		font-size: 11.5px;
		line-height: 14px;
		font-weight: 700;
	}

	.ttab.on sup {
		color: #222;
		top: 9px;
	}

	.ttab.red sup {
		color: #666;
		font-weight: 400;
	}

	/* sectors table */
	.sectors {
		flex: none;
		height: 599px;
		background: #fff;
		padding: 20px 19px 0 18px;
		box-sizing: border-box;
		position: relative;
		border-radius: 0 0 3px 3px;
	}

	.sectors::before {
		content: '';
		position: absolute;
		left: 482px;
		right: 19px;
		top: 18px;
		height: 2px;
		background: #e2e2e2;
	}

	table {
		width: 2125px;
		table-layout: fixed;
		border-collapse: collapse;
	}

	th {
		height: 48px;
		text-align: left;
		font-weight: 700;
		color: #1c1c1c;
		padding: 0;
		border-bottom: 3px solid #1f77b4;
		font-size: 15px;
	}

	td {
		padding: 0;
		height: 56.6px;
		color: #4a4a4a;
		font-size: 15.3px;
		white-space: nowrap;
	}

	tbody tr:first-child td {
		box-shadow: inset 0 9px 8px -8px rgba(60, 170, 220, 0.28);
	}

	tr.hover td {
		background: #f0f0f1;
	}

	.c {
		text-align: center;
	}

	.r {
		text-align: right;
	}

	.num {
		padding-left: 13px;
	}

	.cl {
		padding-left: 23px;
	}

	.supp {
		padding-left: 25px;
	}

	.dash {
		padding-left: 3px;
	}

	.chk {
		display: block;
		margin: 0 auto;
		width: 16px;
		height: 16px;
		accent-color: #1f87d6;
	}

	.dimchk {
		opacity: 0.35;
	}

	.cl .chk {
		margin: -4px 0 0 4px;
		width: 13px;
		height: 13px;
	}

	.drag {
		display: block;
		margin: -3px auto 0;
		width: 18px;
		height: 18px;
		color: #333;
	}

	.pax {
		display: block;
		width: 19px;
		height: 20px;
		margin-top: -5px;
		color: #33333a;
	}

	.acts {
		display: flex;
		gap: 3px;
		margin-top: -2px;
	}

	.act {
		width: 34px;
		height: 31px;
		display: flex;
		align-items: center;
		justify-content: center;
		color: #fff;
		border-radius: 2px;
	}

	.act .ic {
		width: 17px;
		height: 17px;
	}

	.act.blue {
		background: #1f87d6;
	}

	.act.red {
		background: #dc3545;
	}

	.act.off {
		background: #cdcdcd;
		color: #ededed;
	}

	tfoot td {
		height: 49px;
		border-top: 2px solid #222;
		border-bottom: 4px double #111;
		font-weight: 700;
		color: #1c1c1c;
		box-sizing: border-box;
	}

	.gt {
		padding-left: 2px;
		font-size: 15.8px;
	}

	.bottom {
		display: flex;
		margin-top: 19px;
	}

	.tb {
		height: 41px;
		background: #2d9cb1;
		color: #fff;
		font-weight: 600;
		font-size: 15.8px;
		display: flex;
		align-items: center;
		justify-content: center;
		gap: 6px;
		box-sizing: border-box;
		border-radius: 2px;
	}

	.tb .ic {
		width: 17px;
		height: 17px;
	}

	.edit { width: 166px; }
	.copy { width: 96px; margin-left: 54px; }
	.paste { width: 100px; margin-left: 4px; }
	.package { width: 123px; margin-left: 7px; }
	.unpackage { width: 148px; margin-left: 5px; }
	.order { width: 211px; margin-left: auto; }
	.inactive { width: 249px; margin-left: 6px; }

	.pkg {
		width: 214px;
		height: 41px;
		margin-left: 56px;
		box-sizing: border-box;
		border: 1px solid #e4e4e4;
		padding: 0 15px;
		font: inherit;
		border-radius: 2px;
		box-shadow: 0 1px 2px rgba(0, 0, 0, 0.08);
	}

	.foot {
		height: 19px;
		flex: none;
		background: #000;
	}

	.cursor {
		position: absolute;
		left: 683px;
		top: 1047px;
	}
</style>
